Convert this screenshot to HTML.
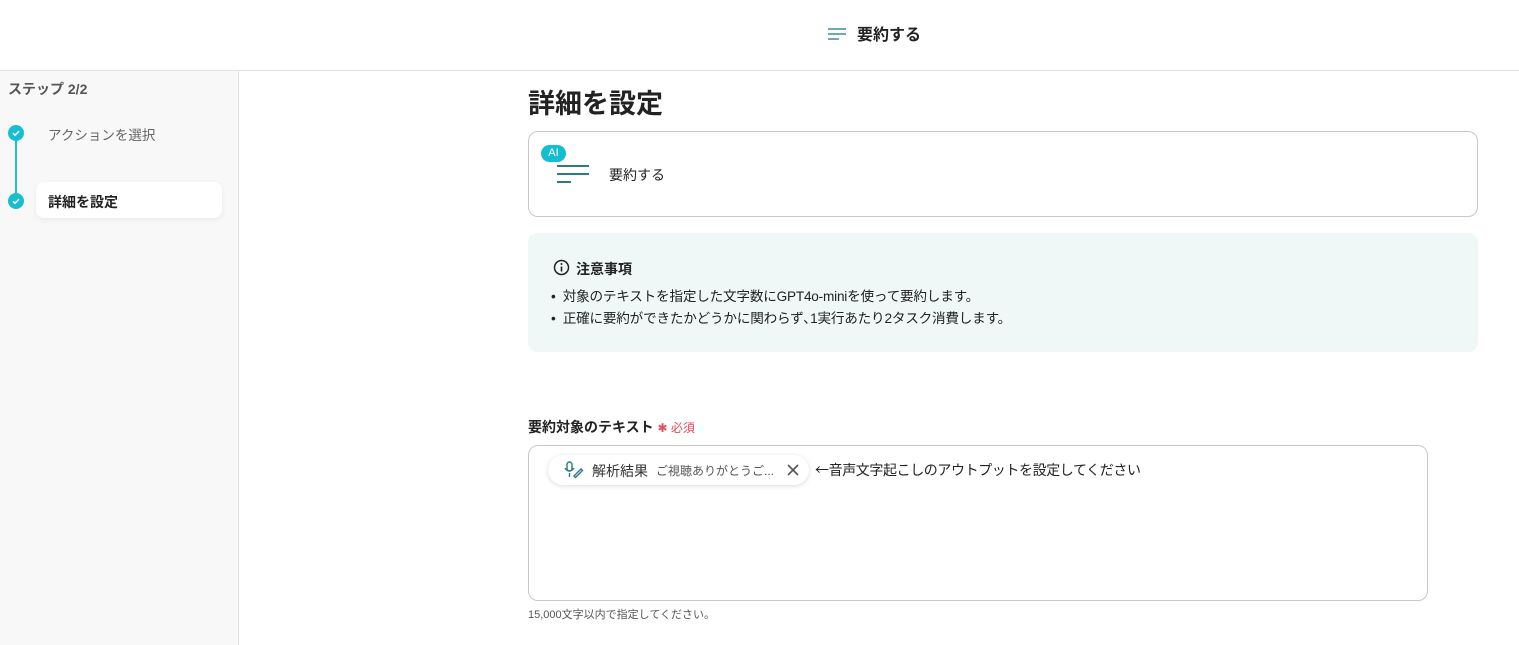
<!DOCTYPE html>
<html><head><meta charset="utf-8"><style>
*{box-sizing:border-box;margin:0;padding:0}
body{width:1519px;height:645px;background:#fff;font-family:"Liberation Sans","Noto Sans CJK JP",sans-serif;color:#222;position:relative;overflow:hidden}
.abs{position:absolute}
</style></head><body>
<div class="abs" style="left:0;top:0;width:1519px;height:71px;border-bottom:1px solid #e3e3e3;background:#fff"></div>
<svg class="abs" style="left:827px;top:27px" width="20" height="14"><path d="M1 2h18M1 7h18M1 12h11" stroke="#3f8e9c" stroke-width="1.6"/></svg>
<div class="abs" style="left:857px;top:21px;font-size:16px;font-weight:bold;color:#222">要約する</div>

<div class="abs" style="left:0;top:71px;width:239px;height:574px;background:#f8f8f8;border-right:1px solid #e3e3e3"></div>
<div class="abs" style="left:8px;top:79px;font-size:14px;font-weight:bold;color:#555">ステップ 2/2</div>
<div class="abs" style="left:15px;top:132px;width:2px;height:68px;background:#1cc3cf"></div>
<div class="abs" style="left:8px;top:125px;width:16px;height:16px;border-radius:50%;background:#15bfd0"></div>
<svg class="abs" style="left:8px;top:125px" width="16" height="16"><path d="M5 8.2l2 2 4-4" fill="none" stroke="#fff" stroke-width="1.5"/></svg>
<div class="abs" style="left:8px;top:193px;width:16px;height:16px;border-radius:50%;background:#15bfd0"></div>
<svg class="abs" style="left:8px;top:193px" width="16" height="16"><path d="M5 8.2l2 2 4-4" fill="none" stroke="#fff" stroke-width="1.5"/></svg>
<div class="abs" style="left:48px;top:124px;font-size:13.5px;color:#666">アクションを選択</div>
<div class="abs" style="left:36px;top:182px;width:186px;height:36px;background:#fff;border-radius:8px;box-shadow:0 2px 6px rgba(0,0,0,.06)"></div>
<div class="abs" style="left:48px;top:192px;font-size:14px;font-weight:bold;color:#222">詳細を設定</div>

<div class="abs" style="left:528px;top:82px;font-size:27px;font-weight:bold;color:#222">詳細を設定</div>
<div class="abs" style="left:528px;top:131px;width:950px;height:86px;border:1px solid #c8c8c8;border-radius:10px"></div>
<div class="abs" style="left:541px;top:145px;width:25px;height:17px;border-radius:9px;background:#14bdd0;color:#fff;font-size:11px;text-align:center;line-height:17px">AI</div>
<svg class="abs" style="left:557px;top:164px" width="32" height="20"><path d="M0 2h32M0 10h32M0 18h14" stroke="#2a7a8a" stroke-width="2"/></svg>
<div class="abs" style="left:609px;top:165px;font-size:14px;color:#222">要約する</div>

<div class="abs" style="left:528px;top:233px;width:950px;height:119px;background:#eff8f7;border-radius:10px"></div>
<svg class="abs" style="left:553px;top:259px" width="17" height="17"><circle cx="8.5" cy="8.5" r="7" fill="none" stroke="#222" stroke-width="1.5"/><path d="M8.5 7.5v5" stroke="#222" stroke-width="1.6"/><circle cx="8.5" cy="5" r="1" fill="#222"/></svg>
<div class="abs" style="left:576px;top:259px;font-size:14px;font-weight:bold">注意事項</div>
<div class="abs" style="left:551px;top:286px;font-size:13.6px;line-height:22px;color:#222;letter-spacing:-0.2px">• &nbsp;対象のテキストを指定した文字数にGPT4o-miniを使って要約します。<br>• &nbsp;正確に要約ができたかどうかに関わらず､1実行あたり2タスク消費します。</div>

<div class="abs" style="left:528px;top:417px;font-size:14px;font-weight:bold">要約対象のテキスト <span style="color:#e54b5a;font-weight:normal;font-size:12px">✱ 必須</span></div>
<div class="abs" style="left:528px;top:445px;width:900px;height:156px;border:1px solid #c8c8c8;border-radius:10px"></div>
<div class="abs" style="left:548px;top:455px;width:261px;height:30px;background:#fff;border-radius:15px;box-shadow:0 1px 5px rgba(0,0,0,.15)"></div>
<svg class="abs" style="left:564px;top:461px" width="20" height="18"><rect x="3" y="1" width="5" height="9" rx="2.5" fill="none" stroke="#2a7a8a" stroke-width="1.4"/><path d="M1 7q4 6 9 0M5.5 12v4M10 15l7-7 1.5 1.5-7 7z" fill="none" stroke="#2a7a8a" stroke-width="1.4"/></svg>
<div class="abs" style="left:592px;top:461px;font-size:14px;color:#333">解析結果</div>
<div class="abs" style="left:656px;top:462px;font-size:12px;color:#555">ご視聴ありがとうご...</div>
<svg class="abs" style="left:786px;top:463px" width="14" height="14"><path d="M2 2l10 10M12 2L2 12" stroke="#555" stroke-width="1.6"/></svg>
<div class="abs" style="left:815px;top:460px;font-size:14px;color:#222;letter-spacing:-0.4px"><span style="font-family:'Noto Sans CJK JP',sans-serif">←</span>音声文字起こしのアウトプットを設定してください</div>
<div class="abs" style="left:528px;top:606px;font-size:11px;color:#555">15,000文字以内で指定してください。</div>
</body></html>
